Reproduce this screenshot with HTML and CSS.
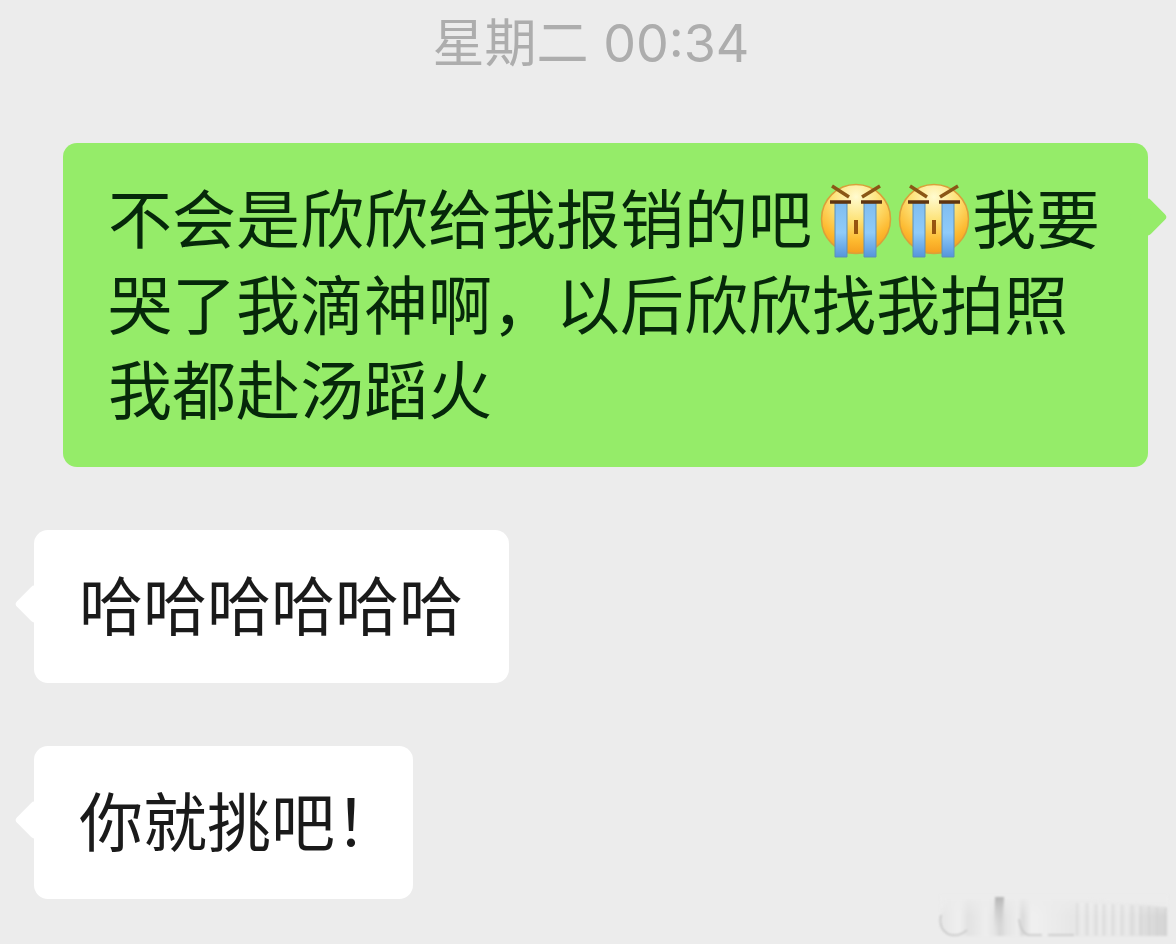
FILE: index.html
```html
<!DOCTYPE html>
<html lang="zh-CN">
<head>
<meta charset="utf-8">
<meta name="viewport" content="width=device-width, initial-scale=1">
<title>聊天</title>
<link rel="stylesheet" href="styles.css">
</head>
<body>
<svg class="defs" aria-hidden="true">
  <defs>
    <radialGradient id="face" cx="50%" cy="18%" r="85%">
      <stop offset="0" stop-color="#fffbd0"/>
      <stop offset=".4" stop-color="#fde277"/>
      <stop offset=".75" stop-color="#fdb92f"/>
      <stop offset="1" stop-color="#f39a1c"/>
    </radialGradient>
    <linearGradient id="tear" x1="0" y1="0" x2="0" y2="1">
      <stop offset="0" stop-color="#7fbdf0"/>
      <stop offset=".55" stop-color="#8fcbfa"/>
      <stop offset="1" stop-color="#5595dc"/>
    </linearGradient>
    <symbol id="cry" viewBox="0 0 72 76">
      <circle cx="36" cy="36" r="34.5" fill="url(#face)" stroke="#d9a03a" stroke-width="1.5"/>
      <path d="M15 20h12v54H15zM44 20h12v54H44z" fill="url(#tear)" stroke="#5d91b8" stroke-width="1"/>
      <path d="M12 3l17 11M60 3L42 14" fill="none" stroke="#8a5716" stroke-width="3.5"/>
      <path d="M10 19h21M41 19h21" fill="none" stroke="#5f3510" stroke-width="3.5"/>
      <path d="M36 37v14" fill="none" stroke="#965510" stroke-width="4"/>
    </symbol>
    <linearGradient id="mark" x1="0" y1="0" x2="1" y2="0">
      <stop offset="0" stop-color="#e6e6e6"/>
      <stop offset=".08" stop-color="#efefef"/>
      <stop offset=".12" stop-color="#e2e2e2"/>
      <stop offset=".2" stop-color="#eeeeee"/>
      <stop offset=".24" stop-color="#e4e4e4"/>
      <stop offset=".26" stop-color="#d6d6d6"/>
      <stop offset=".29" stop-color="#e4e4e4"/>
      <stop offset=".34" stop-color="#ededed"/>
      <stop offset=".36" stop-color="#dadada"/>
      <stop offset=".4" stop-color="#f0f0f0"/>
      <stop offset=".6" stop-color="#e6e6e6"/>
      <stop offset=".8" stop-color="#e6e6e6"/>
      <stop offset="1" stop-color="#d4d4d4"/>
    </linearGradient>
    <linearGradient id="fade" x1="0" y1="0" x2="0" y2="1">
      <stop offset="0" stop-color="#ececec"/>
      <stop offset=".7" stop-color="#ececec" stop-opacity="0"/>
    </linearGradient>
    <linearGradient id="stem" x1="0" y1="0" x2="0" y2="1">
      <stop offset="0" stop-color="#b4b4b4"/>
      <stop offset="1" stop-color="#d6d6d6" stop-opacity="0"/>
    </linearGradient>
  </defs>
</svg>
<main class="chat">
  <time class="time">星期二 00:34</time>
  <p class="bubble sent">不会是欣欣给我报销的吧<span class="emojis"><svg class="emoji" role="img" aria-label="大哭"><use href="#cry"/></svg><svg class="emoji" role="img" aria-label="大哭"><use href="#cry"/></svg></span>我要哭了我滴神啊，以后欣欣找我拍照我都赴汤蹈火</p>
  <p class="bubble received">哈哈哈哈哈哈</p>
  <p class="bubble received">你就挑吧<span class="half">！</span></p>
</main>
<svg class="watermark" viewBox="0 0 232 44" aria-hidden="true">
  <path d="M3 20L8 4H60V1H68V4H150L229 12V41H22Q3 42 3 20z" fill="url(#mark)"/>
  <path d="M2 0h228v30H2z" fill="url(#fade)"/>
  <path d="M57 2h9l-2 36h-8z" fill="url(#stem)"/>
  <path d="M3 20Q0 33 10 39Q20 43 29 35M81 24Q82 37 90 40H104M110 40H136" fill="none" stroke="#c4c4c4" stroke-width="1.5"/>
  <path d="M139 8v33M149 8v33M158 9v32M166 9v32M175 9v32M184 10v31M194 10v31M203 11v30M211 11v30M219 12v29M228 12v29" fill="none" stroke="#cdcdcd" stroke-width="1.5" opacity=".5"/>
  <path d="M144 8v32M153 8v32M162 9v31M171 9v31M180 10v30M189 10v30M199 11v29" fill="none" stroke="#f3f3f3" stroke-width="2" opacity=".5"/>
</svg>
</body>
</html>
```
FILE: styles.css
```css
* {
  box-sizing: border-box;
}

body {
  position: relative;
  min-height: 100vh;
  margin: 0;
  background: #ececec;
  color: #1a1a1a;
  font-family: Inter, "Noto Sans CJK SC", sans-serif;
}

.defs {
  position: absolute;
  width: 0;
  height: 0;
}

.chat {
  display: flex;
  flex-direction: column;
  align-items: flex-start;
  gap: 63px;
  padding: 12px 28px 44px 34px;
}

.time {
  align-self: center;
  margin-bottom: 4px;
  color: #adadad;
  font-size: 52px;
  line-height: 64px;
}

.bubble {
  position: relative;
  margin: 0;
  padding: 30px 46px 38px 45px;
  border-radius: 14px;
  font-family: "Noto Sans CJK SC", sans-serif;
  font-size: 64px;
  line-height: 85px;
}

.bubble::before {
  content: "";
  position: absolute;
  top: 60px;
  width: 28px;
  height: 28px;
  border-radius: 4px;
  background: inherit;
  transform: rotate(45deg);
}

.sent {
  align-self: flex-end;
  margin-left: 29px;
  padding: 30px 43px 38px 45px;
  background: #95ec69;
  color: #06280a;
}

.sent::before {
  right: -14px;
}

.received {
  background: #ffffff;
}

.received::before {
  left: -14px;
}

.emojis {
  display: inline-flex;
  gap: 6px;
  padding: 0 2px 0 8px;
  vertical-align: -16px;
}

.emoji {
  width: 72px;
  height: 76px;
}

.half {
  font-feature-settings: "halt";
}

.watermark {
  position: absolute;
  right: 6px;
  bottom: 5px;
  width: 232px;
  height: 44px;
  filter: blur(1px);
}
```
